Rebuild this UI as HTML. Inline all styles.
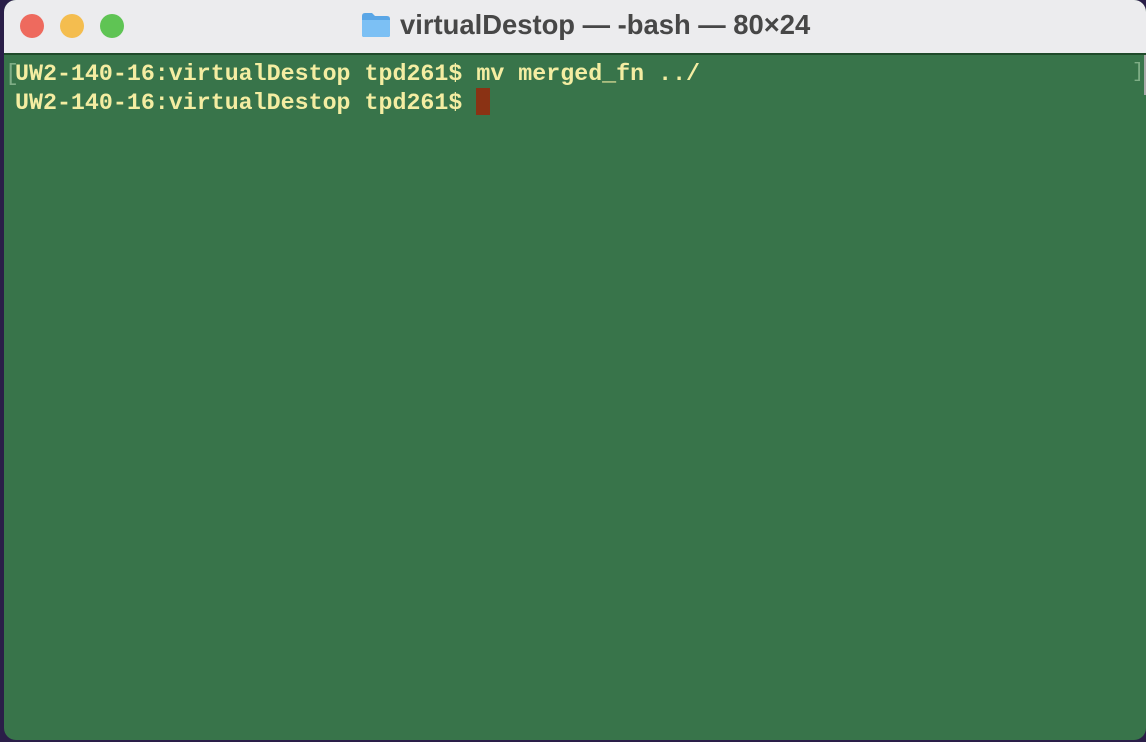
<!DOCTYPE html>
<html><head><meta charset="utf-8"><style>
html,body{margin:0;padding:0;width:1146px;height:742px;overflow:hidden;background:#2a1e48;}
.win{position:absolute;left:4px;top:0;width:1142px;height:740px;border-radius:12px;overflow:hidden;background:#38744a;}
.tb{position:absolute;left:0;top:0;width:100%;height:53px;background:#ececee;border-bottom:2px solid #1f4a2a;}
.dot{position:absolute;top:14px;width:24px;height:24px;border-radius:50%;}
.title{position:absolute;left:396px;top:9px;font:bold 27.4px "Liberation Sans",sans-serif;color:#474747;white-space:nowrap;}
.folder{position:absolute;left:357px;top:11px;}
.term{position:absolute;left:11px;top:60px;font:bold 23.3px/28px "Liberation Mono",monospace;color:#f4eda2;white-space:pre;}
.br{color:#7fae86;font-weight:normal;}
.cur{display:inline-block;width:14px;height:27px;background:#8a3214;vertical-align:-6px;}
.sb{position:absolute;right:0;top:55px;width:2px;height:40px;background:#aaa;}
</style></head><body>
<div class="win">
<div class="tb">
<div class="dot" style="left:16px;background:#ee6a5e"></div>
<div class="dot" style="left:56px;background:#f4bd4f"></div>
<div class="dot" style="left:96px;background:#5fc454"></div>
<svg class="folder" width="30" height="28" viewBox="0 0 30 26"><path d="M1 4 Q1 1 4 1 H11 L14 4 H26 Q29 4 29 7 V23 Q29 25 27 25 H3 Q1 25 1 23 Z" fill="#5aa6e6"/><path d="M1 8 H29 V23 Q29 25 27 25 H3 Q1 25 1 23 Z" fill="#7cc0f4"/></svg>
<div class="title">virtualDestop — -bash — 80×24</div>
</div>
<div class="term"><span class="br" style="position:absolute;left:-10px">[</span>UW2-140-16:virtualDestop tpd261$ mv merged_fn ../
UW2-140-16:virtualDestop tpd261$ <span class="cur"></span></div>
<div style="position:absolute;left:1128px;top:61px;font:20px 'Liberation Mono',monospace;color:#7fae86">]</div>
<div class="sb"></div>
</div>
</body></html>
